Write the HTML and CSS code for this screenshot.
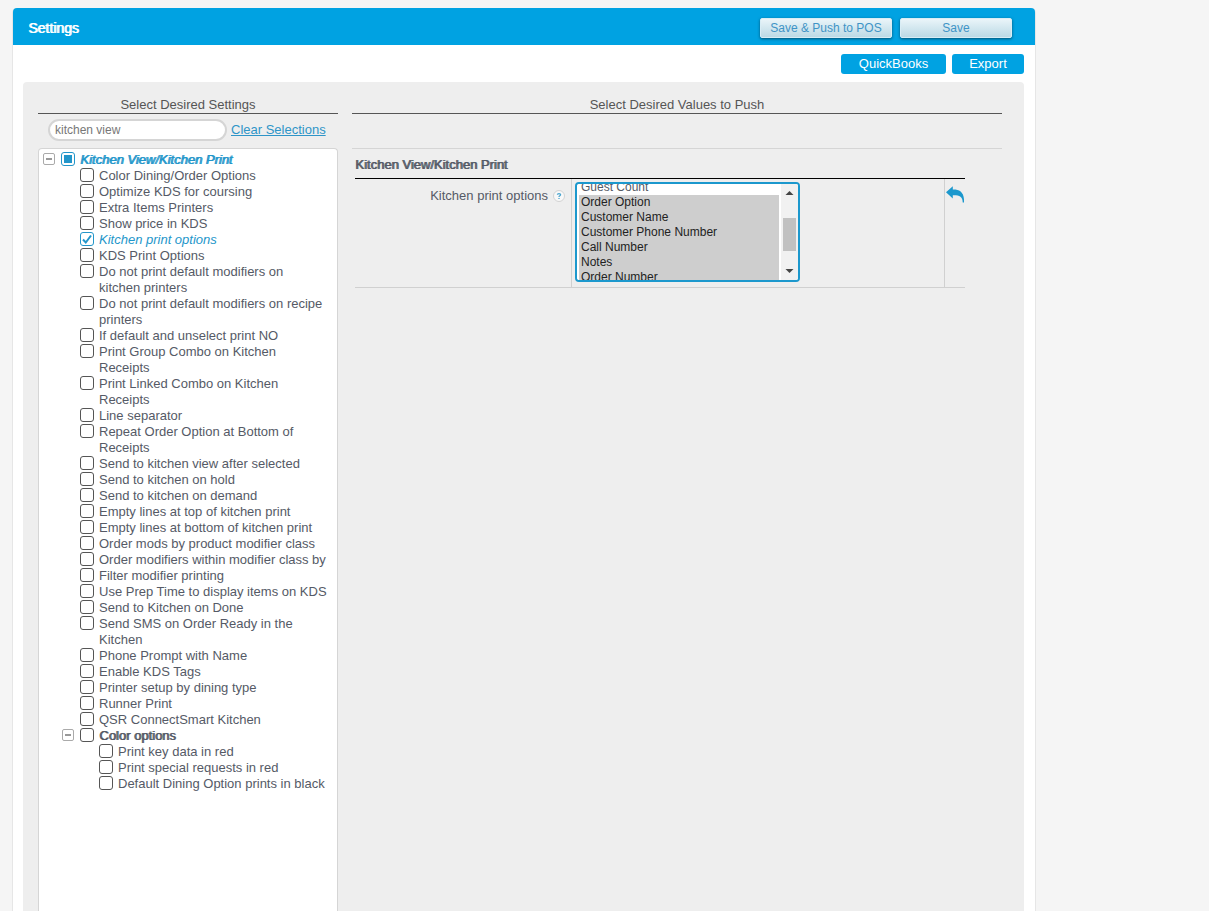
FILE: index.html
```html
<!DOCTYPE html>
<html lang="en">
<head>
    <meta charset="UTF-8">
    <meta name="viewport" content="width=device-width, initial-scale=1.0">
    <title>Settings</title>
    <link rel="stylesheet" href="styles.css">
</head>
<body>
    <div class="page">
        <header class="page-header">
            <h1>Settings</h1>
            <div class="header-actions">
                <button type="button" class="btn-light btn-push">Save &amp; Push to POS</button>
                <button type="button" class="btn-light btn-save">Save</button>
            </div>
        </header>

        <div class="toolbar">
            <button type="button" class="btn-blue btn-quickbooks">QuickBooks</button>
            <button type="button" class="btn-blue btn-export">Export</button>
        </div>

        <main class="panel">
            <section class="settings-col">
                <h2 class="col-title">Select Desired Settings</h2>
                <div class="search-row">
                    <input type="text" class="search" aria-label="Search settings" value="kitchen view">
                    <a href="#" class="clear-link">Clear Selections</a>
                </div>
                <ul class="tree">
                    <li>
                        <div class="row group active">
                            <button type="button" class="toggle" aria-label="Collapse Kitchen View/Kitchen Print"></button>
                            <label><input type="checkbox" class="partial"><span>Kitchen View/Kitchen Print</span></label>
                        </div>
                        <ul>
                            <li class="row"><label><input type="checkbox"><span>Color Dining/Order Options</span></label></li>
                            <li class="row"><label><input type="checkbox"><span>Optimize KDS for coursing</span></label></li>
                            <li class="row"><label><input type="checkbox"><span>Extra Items Printers</span></label></li>
                            <li class="row"><label><input type="checkbox"><span>Show price in KDS</span></label></li>
                            <li class="row active"><label><input type="checkbox" checked><span>Kitchen print options</span></label></li>
                            <li class="row"><label><input type="checkbox"><span>KDS Print Options</span></label></li>
                            <li class="row"><label><input type="checkbox"><span>Do not print default modifiers on kitchen printers</span></label></li>
                            <li class="row"><label><input type="checkbox"><span>Do not print default modifiers on recipe printers</span></label></li>
                            <li class="row"><label><input type="checkbox"><span>If default and unselect print NO</span></label></li>
                            <li class="row"><label><input type="checkbox"><span>Print Group Combo on Kitchen Receipts</span></label></li>
                            <li class="row"><label><input type="checkbox"><span>Print Linked Combo on Kitchen Receipts</span></label></li>
                            <li class="row"><label><input type="checkbox"><span>Line separator</span></label></li>
                            <li class="row"><label><input type="checkbox"><span>Repeat Order Option at Bottom of Receipts</span></label></li>
                            <li class="row"><label><input type="checkbox"><span>Send to kitchen view after selected</span></label></li>
                            <li class="row"><label><input type="checkbox"><span>Send to kitchen on hold</span></label></li>
                            <li class="row"><label><input type="checkbox"><span>Send to kitchen on demand</span></label></li>
                            <li class="row"><label><input type="checkbox"><span>Empty lines at top of kitchen print</span></label></li>
                            <li class="row"><label><input type="checkbox"><span>Empty lines at bottom of kitchen print</span></label></li>
                            <li class="row"><label><input type="checkbox"><span>Order mods by product modifier class</span></label></li>
                            <li class="row"><label><input type="checkbox"><span>Order modifiers within modifier class by</span></label></li>
                            <li class="row"><label><input type="checkbox"><span>Filter modifier printing</span></label></li>
                            <li class="row"><label><input type="checkbox"><span>Use Prep Time to display items on KDS</span></label></li>
                            <li class="row"><label><input type="checkbox"><span>Send to Kitchen on Done</span></label></li>
                            <li class="row"><label><input type="checkbox"><span>Send SMS on Order Ready in the Kitchen</span></label></li>
                            <li class="row"><label><input type="checkbox"><span>Phone Prompt with Name</span></label></li>
                            <li class="row"><label><input type="checkbox"><span>Enable KDS Tags</span></label></li>
                            <li class="row"><label><input type="checkbox"><span>Printer setup by dining type</span></label></li>
                            <li class="row"><label><input type="checkbox"><span>Runner Print</span></label></li>
                            <li class="row"><label><input type="checkbox"><span>QSR ConnectSmart Kitchen</span></label></li>
                            <li>
                                <div class="row group">
                                    <button type="button" class="toggle" aria-label="Collapse Color options"></button>
                                    <label><input type="checkbox"><span>Color options</span></label>
                                </div>
                                <ul>
                                    <li class="row"><label><input type="checkbox"><span>Print key data in red</span></label></li>
                                    <li class="row"><label><input type="checkbox"><span>Print special requests in red</span></label></li>
                                    <li class="row"><label><input type="checkbox"><span>Default Dining Option prints in black</span></label></li>
                                </ul>
                            </li>
                        </ul>
                    </li>
                </ul>
            </section>

            <section class="values-col">
                <h2 class="col-title">Select Desired Values to Push</h2>
                <div class="values">
                    <h3 class="values-title">Kitchen View/Kitchen Print</h3>
                    <div class="value-row">
                        <div class="value-label">
                            <label for="printOptions">Kitchen print options</label>
                            <svg class="help" viewBox="0 0 12 12" role="img" aria-label="Help">
                                <circle cx="6" cy="6" r="5.5" fill="#f8f8f8" stroke="#d2d2d2"/>
                                <path d="M4.4 4.8C4.4 3.1 7.6 3.1 7.6 4.8C7.6 5.9 6 5.7 6 7M6 8V9" fill="none" stroke="#4aa5cf" stroke-width="1.3"/>
                            </svg>
                        </div>
                        <div class="value-field">
                            <div class="listbox">
                                <select id="printOptions" multiple>
                                    <option>Table</option>
                                    <option>Seat</option>
                                    <option>Server Name</option>
                                    <option>Guest Count</option>
                                    <option selected>Order Option</option>
                                    <option selected>Customer Name</option>
                                    <option selected>Customer Phone Number</option>
                                    <option selected>Call Number</option>
                                    <option selected>Notes</option>
                                    <option selected>Order Number</option>
                                    <option>Station</option>
                                    <option>Time</option>
                                </select>
                                <div class="scrollbar">
                                    <button type="button" id="scrollUp" aria-label="Scroll up">
                                        <svg viewBox="0 0 17 17"><path d="M4.500 11L8.500 7L12.500 11Z"/></svg>
                                    </button>
                                    <div class="track"><div class="thumb" id="thumb"></div></div>
                                    <button type="button" id="scrollDown" aria-label="Scroll down">
                                        <svg viewBox="0 0 17 17"><path d="M4.500 6L8.500 10L12.500 6Z"/></svg>
                                    </button>
                                </div>
                            </div>
                        </div>
                        <div class="value-undo">
                            <button type="button" class="undo" aria-label="Undo">
                                <svg viewBox="0 0 18 17">
                                    <path d="M0 6.3L6.8 0.2V3.5C13.5 3.3 18.6 6 18 16.5H16.7C16.8 10.8 13.5 9 6.8 9.2V12.4Z" fill="#1c98cd"/>
                                </svg>
                            </button>
                        </div>
                    </div>
                </div>
            </section>
        </main>
    </div>

    <script>
        document.querySelector('.partial').indeterminate = true;

        const list = document.getElementById('printOptions');
        const thumb = document.getElementById('thumb');

        function moveThumb() {
            const track = thumb.parentElement.clientHeight;
            thumb.style.height = Math.round(track * list.clientHeight / list.scrollHeight) + 'px';
            thumb.style.marginTop = Math.round(track * list.scrollTop / list.scrollHeight) + 'px';
        }

        list.addEventListener('scroll', moveThumb);
        document.getElementById('scrollUp').addEventListener('click', () => list.scrollTop -= 15);
        document.getElementById('scrollDown').addEventListener('click', () => list.scrollTop += 15);

        // bring the selected options into view
        list.scrollTop = 49;
        moveThumb();
    </script>
</body>
</html>
```

FILE: styles.css
```css
* {
    margin: 0;
    padding: 0;
    box-sizing: border-box;
}

body {
    display: flex;
    flex-direction: column;
    min-height: 100vh;
    padding: 8px 12px 0;
    background: #f5f5f5;
    color: #555a66;
    font-family: "Liberation Sans", Arial, sans-serif;
    font-size: 13px;
    line-height: 16px;
}

button, input, select {
    font-family: inherit;
    font-size: 12px;
}

ul {
    list-style: none;
}

.page {
    display: flex;
    flex-direction: column;
    flex: 1;
    width: 100%;
    max-width: 1024px;
    background: #fff;
    border: solid #e6e6e6;
    border-width: 0 1px;
    border-radius: 5px 5px 0 0;
}

.page-header {
    display: flex;
    align-items: center;
    justify-content: space-between;
    padding: 10px 23px 7px 15px;
    background: #00a2e2;
    border-radius: 4px 4px 0 0;
}

.page-header h1 {
    color: #fff;
    font-size: 14px;
    font-weight: normal;
    line-height: 18px;
    text-shadow: 1px 0 0 currentColor;
}

.header-actions {
    display: flex;
    gap: 8px;
}

.btn-light {
    height: 20px;
    border: 1px solid #d9edf5;
    border-radius: 2px;
    background: linear-gradient(#eaf5f9, #bcdae5);
    box-shadow: 0 1px 3px rgba(0, 0, 0, 0.5);
    color: #3f94c6;
    cursor: pointer;
}

.btn-push {
    width: 132px;
}

.btn-save {
    width: 112px;
}

.toolbar {
    display: flex;
    justify-content: flex-end;
    gap: 6px;
    padding: 9px 11px 8px;
}

.btn-blue {
    height: 20px;
    padding-bottom: 1px;
    border: none;
    border-radius: 3px;
    background: #00a2e2;
    color: #fff;
    font-size: 13px;
    cursor: pointer;
}

.btn-quickbooks {
    width: 105px;
}

.btn-export {
    width: 72px;
}

.panel {
    display: flex;
    flex: 1;
    gap: 14px;
    margin: 0 11px 0 10px;
    padding: 15px 22px 0 15px;
    background: #eee;
    border-radius: 4px 4px 0 0;
}

.settings-col {
    display: flex;
    flex-direction: column;
    flex: 0 0 300px;
}

.values-col {
    flex: 1;
}

.col-title {
    border-bottom: 1px solid #555;
    color: #555;
    font-size: 13px;
    font-weight: normal;
    text-align: center;
}

.search-row {
    display: flex;
    align-items: center;
    gap: 4px;
    height: 34px;
    padding: 0 10px 2px;
}

.search {
    width: 179px;
    height: 22px;
    padding: 0 5px;
    border: 2px solid #d5d5d5;
    border-radius: 11px;
    background: #fff;
    color: #777;
}

.clear-link {
    color: #2e95c8;
}

/* settings tree */
.tree {
    flex: 1;
    padding: 3px 9px 16px 4px;
    background: #fff;
    border: 1px solid #d5d5d5;
    border-bottom: none;
    border-radius: 4px 4px 0 0;
}

.tree ul {
    padding-left: 19px;
}

.row {
    display: flex;
    padding-left: 18px;
}

.row label {
    display: flex;
    gap: 5px;
}

.row.group {
    gap: 6px;
    padding-left: 0;
}

.row.group span {
    text-shadow: 1px 0 0 currentColor;
}

.row.active {
    color: #2396ca;
    font-style: italic;
}

.toggle {
    width: 12px;
    height: 12px;
    margin-top: 1px;
    border: 1px solid #aaa;
    border-radius: 2px;
    background: linear-gradient(#999, #999) center / 6px 2px no-repeat #fff;
}

.row input {
    appearance: none;
    flex: none;
    width: 14px;
    height: 14px;
    border: 1px solid #555;
    border-radius: 3px;
    background: #fff;
}

.row input:indeterminate {
    border-color: #2396ca;
    background: linear-gradient(#2396ca, #2396ca) center / 8px 8px no-repeat #fff;
}

.row input:checked {
    border-color: #2396ca;
    background: #fff url("data:image/svg+xml,%3Csvg xmlns='http://www.w3.org/2000/svg' viewBox='0 0 12 12'%3E%3Cpath d='M2 6.5L4.8 9.5L10 2.5' fill='none' stroke='%232396ca' stroke-width='2'/%3E%3C/svg%3E") center / 12px 12px no-repeat;
}

/* values */
.values {
    margin-top: 34px;
    padding: 8px 37px 0 3px;
    border-top: 1px solid #d5d5d5;
}

.values-title {
    padding-bottom: 5px;
    border-bottom: 1px solid #000;
    font-size: 13px;
    font-weight: normal;
    text-shadow: 1px 0 0 currentColor;
}

.value-row {
    display: flex;
    border-bottom: 1px solid #d0d0d0;
}

.value-label {
    display: flex;
    justify-content: flex-end;
    gap: 5px;
    width: 216px;
    padding: 9px 6px 0 0;
}

.help {
    width: 12px;
    height: 12px;
    margin-top: 2px;
}

.value-field {
    flex: 1;
    padding: 3px 3px 5px;
    border: solid #d0d0d0;
    border-width: 0 1px;
}

.listbox {
    display: flex;
    width: 225px;
    height: 100px;
    border: 2px solid #1c98cd;
    border-radius: 4px;
    background: #fff;
    overflow: hidden;
}

.listbox select {
    flex: 1;
    height: 96px;
    padding: 0 2px;
    border: none;
    background: #fff;
    color: #555a66;
    outline: none;
    scrollbar-width: none;
}

.listbox option {
    height: 15px;
    min-height: 15px;
    padding: 0 2px;
    line-height: 15px;
}

.listbox option:checked {
    background: #cecece;
    color: #222;
}

.scrollbar {
    display: flex;
    flex-direction: column;
    width: 17px;
    background: #f1f1f1;
}

.scrollbar button {
    height: 17px;
    border: none;
    background: none;
}

.scrollbar svg {
    display: block;
    width: 17px;
    height: 17px;
    fill: #444;
}

.track {
    display: flow-root;
    flex: 1;
    padding: 0 2px;
}

.thumb {
    background: #c1c1c1;
}

.value-undo {
    width: 20px;
    padding-top: 7px;
}

.undo {
    display: block;
    width: 20px;
    height: 17px;
    padding: 0 1px;
    border: none;
    background: none;
    cursor: pointer;
}

.undo svg {
    display: block;
    width: 18px;
    height: 17px;
}
```
